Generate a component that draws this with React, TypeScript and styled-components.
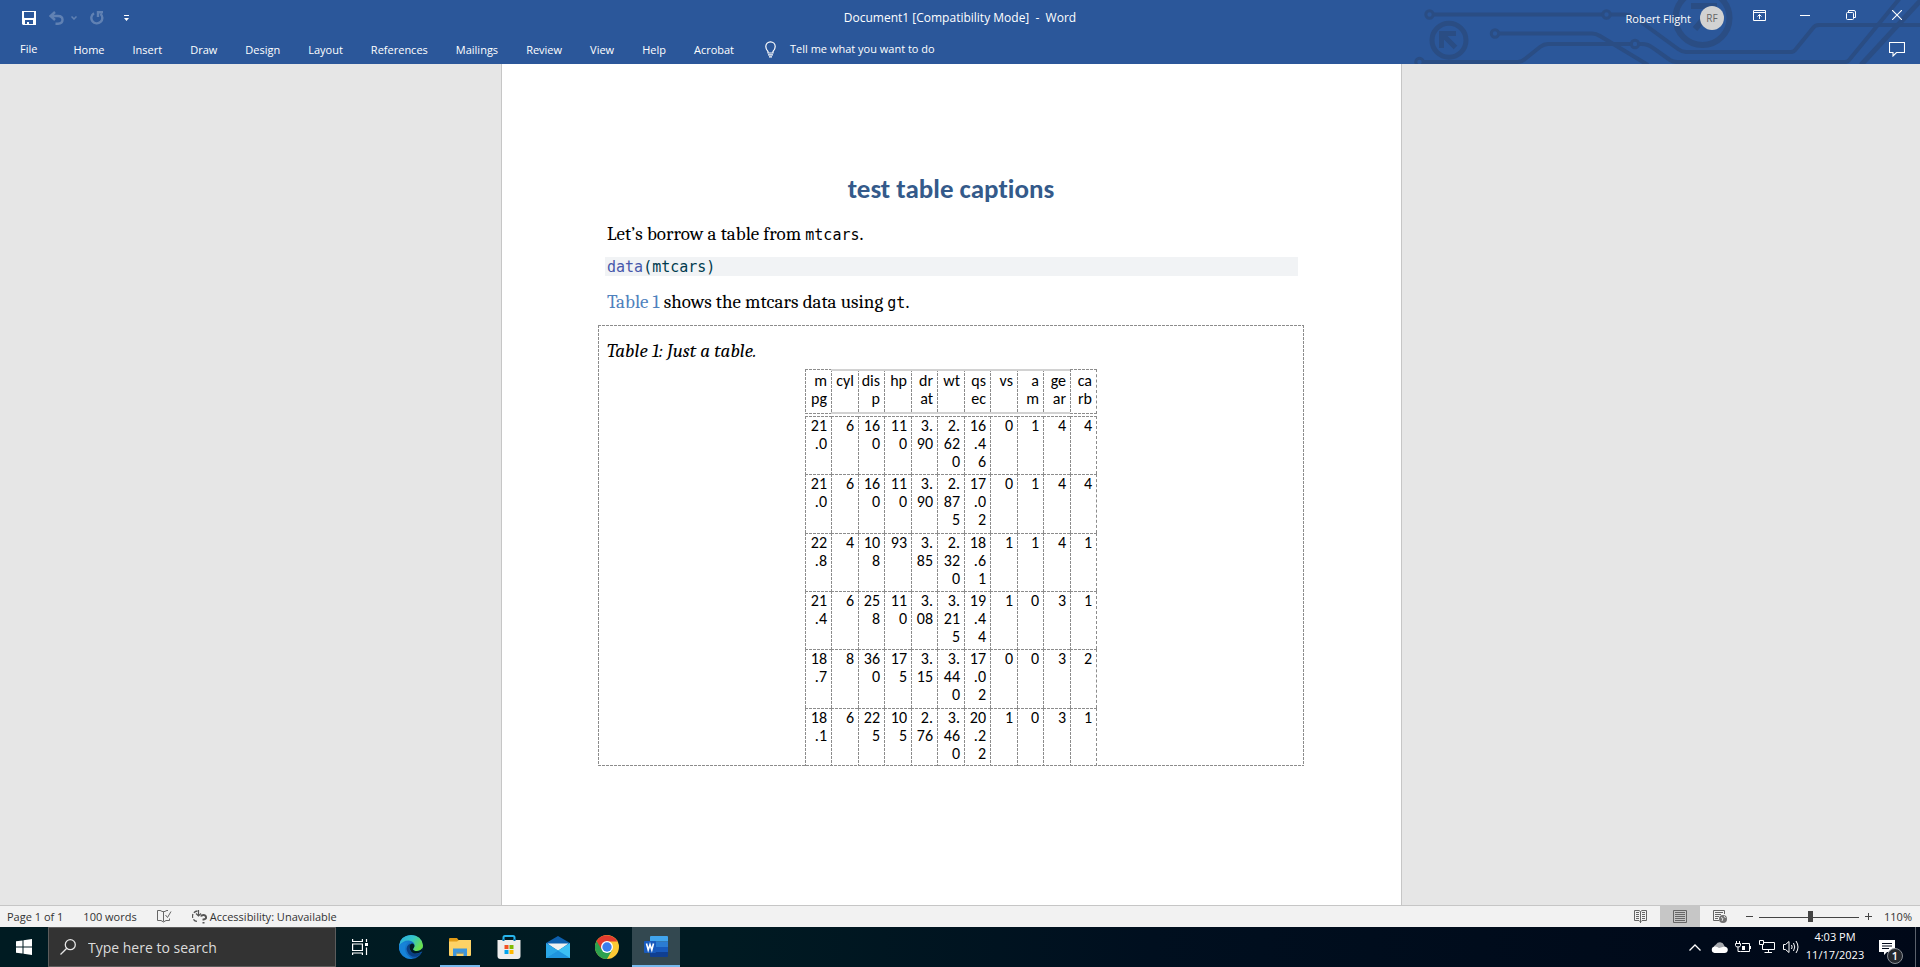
import React from 'react';
import styled, { createGlobalStyle } from 'styled-components';

const ui = `'Open Sans', 'Noto Sans', sans-serif`;
const serif = `Caladea, 'Liberation Serif', serif`;
const calibri = `Carlito, Lato, sans-serif`;
const mono = `'DejaVu Sans Mono', 'Liberation Mono', monospace`;

const dashX = 'repeating-linear-gradient(90deg, #8c8c8c 0 3px, transparent 3px 4px)';
const dashY = 'repeating-linear-gradient(180deg, #8c8c8c 0 3px, transparent 3px 4px)';

const GlobalStyle = createGlobalStyle`
  * { box-sizing: border-box; }
  body { margin: 0; background: #e6e6e6; font-family: ${ui}; }
  button { border: 0; padding: 0; background: none; font: inherit; color: inherit; }
  svg { display: block; }
`;

const Window = styled.div`
  display: flex;
  flex-direction: column;
  min-height: 100vh;
`;

/* ---------- title bar and ribbon ---------- */

const Header = styled.header`
  position: relative;
  flex: none;
  height: 64px;
  background: #2b579a;
  color: #fff;
  overflow: hidden;
`;

const Circuit = styled.svg`
  position: absolute;
  top: 0;
  right: 0;
`;

const TitleBar = styled.div`
  position: relative;
  display: grid;
  grid-template-columns: 1fr auto 1fr;
  height: 34px;
`;

const QuickAccess = styled.div`
  display: flex;
  align-items: center;
  gap: 13px;
  padding-left: 22px;
`;

const IconButton = styled.button<{ $dim?: boolean }>`
  display: flex;
  opacity: ${(p) => (p.$dim ? 0.25 : 1)};
`;

const Split = styled.div`
  display: flex;
  align-items: center;
  gap: 7px;
`;

const CustomizeButton = styled(IconButton)`
  margin-left: 7px;
`;

const DocTitle = styled.div`
  font-size: 12px;
  line-height: 36px;
  white-space: pre;
`;

const Account = styled.div`
  display: flex;
  justify-content: flex-end;
  align-items: center;
`;

const UserName = styled.span`
  font-size: 11px;
  margin-right: 9px;
`;

const Avatar = styled.span`
  width: 24px;
  height: 24px;
  margin-right: 12px;
  border-radius: 50%;
  background: #d2d2d2;
  color: #666;
  font-size: 10px;
  line-height: 24px;
  text-align: center;
`;

const WindowButton = styled.button`
  display: flex;
  justify-content: center;
  align-items: center;
  align-self: flex-start;
  width: 46px;
  height: 30px;
`;

const Ribbon = styled.nav`
  position: relative;
  display: flex;
  align-items: center;
  gap: 28px;
  height: 30px;
  padding: 0 15px 0 20px;
  font-size: 11px;
  line-height: 30px;
`;

const FileTab = styled.button`
  margin-right: 8px;
`;

const Tab = styled.button`
  padding-top: 2px;
`;

const TellMe = styled.button`
  display: flex;
  align-items: center;
  gap: 14px;
  margin: 0 auto 0 3px;
`;

/* ---------- document ---------- */

const Workspace = styled.main`
  flex: 1;
  display: flex;
  justify-content: center;
  padding-right: 17px;
  background: #e6e6e6;
`;

const Page = styled.article`
  width: 901px;
  padding: 109px 97px 0 96px;
  border: solid #c6c6c6;
  border-width: 0 1px;
  background: #fff;
  color: #000;
`;

const Heading = styled.h1`
  margin: 0 0 17px;
  color: #345a8a;
  font: bold 27px/32px ${calibri};
  font-variant-ligatures: none;
  text-align: center;
`;

const Paragraph = styled.p`
  margin: 0;
  padding: 0 9px;
  font: 19px/24px ${serif};
`;

const InlineCode = styled.code`
  font: 15px ${mono};
`;

const CodeBlock = styled.pre`
  margin: 11px 6px 14px 7px;
  padding: 1px 2px 0;
  background: #f1f3f5;
  color: #003b4f;
  font: 15px/18px ${mono};
`;

const Fn = styled.span`
  color: #4758ab;
`;

const CrossRef = styled.a`
  color: #4f81bd;
  text-decoration: none;
`;

const TableBox = styled.figure`
  margin: 11px 0 0;
  padding-top: 14px;
  background:
    ${dashX} 0 0 / 100% 1px no-repeat,
    ${dashX} 0 100% / 100% 1px no-repeat,
    ${dashY} 0 0 / 1px 100% no-repeat,
    ${dashY} 100% 0 / 1px 100% no-repeat;
`;

const Caption = styled.figcaption`
  padding: 0 9px 6px;
  font: italic 19px/24px ${serif};
`;

const DataTable = styled.table`
  width: 292px;
  margin: 0 auto;
  border-collapse: separate;
  border-spacing: 0;
  table-layout: fixed;
  font: 16px/18px ${calibri};
  text-align: right;

  tbody::before {
    content: '';
    display: table-row;
    height: 2px;
  }
`;

const HeadCell = styled.th<{ $edge: boolean }>`
  height: 45px;
  padding: 3px 4px 0 3px;
  font-weight: normal;
  text-align: right;
  vertical-align: top;
  line-break: anywhere;
  background:
    ${(p) => (p.$edge ? dashX : 'linear-gradient(#d2d2d2, #d2d2d2)')} 0 0 / 100% ${(p) => (p.$edge ? 1 : 2)}px no-repeat,
    ${(p) => (p.$edge ? dashX : 'linear-gradient(#d2d2d2, #d2d2d2)')} 0 100% / 100% ${(p) => (p.$edge ? 1 : 2)}px no-repeat,
    ${dashY} 0 0 / 1px 100% no-repeat;

  &:last-child {
    border-right: 1px dashed #8c8c8c;
  }
`;

const Row = styled.tr`
  height: 58px;

  &:nth-child(3n + 2) {
    height: 59px;
  }
`;

const Cell = styled.td`
  padding: 1px 4px 3px;
  vertical-align: top;
  line-break: anywhere;
  background:
    ${dashX} 0 0 / 100% 1px no-repeat,
    ${dashY} 0 0 / 1px 100% no-repeat;

  &:last-child {
    border-right: 1px dashed #8c8c8c;
  }
`;

/* ---------- status bar ---------- */

const StatusBar = styled.footer`
  display: flex;
  flex: none;
  align-items: center;
  height: 22px;
  padding: 0 8px 0 7px;
  border-top: 1px solid #c6c6c6;
  background: #f2f2f2;
  color: #333;
  font-size: 11px;
  line-height: 21px;
`;

const StatusItem = styled.button`
  display: flex;
  align-items: center;
  gap: 3px;
  margin-right: 20px;
`;

const ViewControls = styled.div`
  display: flex;
  align-items: center;
  margin-left: auto;
`;

const ViewButton = styled.button<{ $active?: boolean }>`
  display: flex;
  justify-content: center;
  align-items: center;
  width: 40px;
  height: 21px;
  background: ${(p) => (p.$active ? '#c6c6c6' : 'none')};
`;

const ZoomButton = styled.button`
  display: flex;
  margin: 0 5px;
`;

const ZoomSlider = styled.input`
  width: 100px;
  height: 12px;
  margin: 0;
  appearance: none;
  background: linear-gradient(#444, #444) 0 6px / 100% 1px no-repeat;

  &::-webkit-slider-thumb {
    appearance: none;
    width: 5px;
    height: 11px;
    background: #444;
  }
`;

const ZoomLevel = styled.button`
  margin-left: 6px;
`;

/* ---------- taskbar ---------- */

const Taskbar = styled.footer`
  display: flex;
  flex: none;
  height: 40px;
  background: linear-gradient(90deg, #001b22 0%, #001a22 38%, #000f1f 60%, #000818 100%);
  color: #fff;
`;

const TaskButton = styled.button<{ $active?: boolean; $wide?: boolean }>`
  position: relative;
  display: flex;
  justify-content: center;
  align-items: center;
  width: 48px;
  background: ${(p) => (p.$active ? '#334850' : 'none')};

  &::after {
    content: '';
    position: absolute;
    right: ${(p) => (p.$wide ? 4 : 0)}px;
    bottom: 0;
    left: ${(p) => (p.$wide ? 4 : 0)}px;
    height: ${(p) => (p.$active || p.$wide ? 2 : 0)}px;
    background: #76b9ed;
  }
`;

const SearchBox = styled.label`
  display: flex;
  align-items: center;
  gap: 12px;
  width: 288px;
  padding: 0 11px;
  border: 1px solid #5c5c5c;
  background: #333;
`;

const SearchInput = styled.input`
  flex: 1;
  min-width: 0;
  padding: 0;
  border: 0;
  outline: 0;
  background: none;
  color: #dcdcdc;
  font: 14px ${ui};

  &::placeholder { color: #dcdcdc; }
`;

const Apps = styled.div`
  display: flex;
  gap: 1px;
  margin-left: 3px;
`;

const Tray = styled.div`
  display: flex;
  align-items: center;
  margin-left: auto;
`;

const TrayButton = styled.button`
  display: flex;
  justify-content: center;
  width: 24px;
`;

const Clock = styled.button`
  width: 64px;
  padding-bottom: 2px;
  font-size: 11px;
  line-height: 18px;
  text-align: center;
`;

const Notifications = styled.button`
  position: relative;
  display: flex;
  margin: 0 20px 0 12px;
`;

const Badge = styled.span`
  position: absolute;
  top: 8px;
  left: 8px;
  width: 16px;
  height: 16px;
  border: 1px solid #8a8f96;
  border-radius: 50%;
  background: #25282e;
  font-size: 11px;
  font-weight: 600;
  line-height: 14px;
  text-align: center;
`;

const ShowDesktop = styled.button`
  width: 5px;
  height: 40px;
  border-left: 1px solid #5b616c;
`;

/* ---------- data ---------- */

const tabs = ['Home', 'Insert', 'Draw', 'Design', 'Layout', 'References', 'Mailings', 'Review', 'View', 'Help', 'Acrobat'];
const columns = ['mpg', 'cyl', 'disp', 'hp', 'drat', 'wt', 'qsec', 'vs', 'am', 'gear', 'carb'];
const widths = [26, 27, 26, 27, 26, 27, 26, 27, 26, 27, 27];
const rows = [
  ['21.0', '6', '160', '110', '3.90', '2.620', '16.46', '0', '1', '4', '4'],
  ['21.0', '6', '160', '110', '3.90', '2.875', '17.02', '0', '1', '4', '4'],
  ['22.8', '4', '108', '93', '3.85', '2.320', '18.61', '1', '1', '4', '1'],
  ['21.4', '6', '258', '110', '3.08', '3.215', '19.44', '1', '0', '3', '1'],
  ['18.7', '8', '360', '175', '3.15', '3.440', '17.02', '0', '0', '3', '2'],
  ['18.1', '6', '225', '105', '2.76', '3.460', '20.22', '1', '0', '3', '1'],
];

/* ---------- drawings ---------- */

const CircuitArt = () => (
  <Circuit width="520" height="64" viewBox="0 0 520 64" fill="none" stroke="#2a4d84" strokeWidth="4" aria-hidden="true">
    <circle cx="29.500" cy="14.500" r="3.700" strokeWidth="3" />
    <path d="M33 14.500H203M210 14.500H224Q230 14.500 234 17L278 49Q282 52 286 52H391Q394 52 396 49L413 28Q415 25 419 25H520" />
    <circle cx="206.500" cy="14.500" r="3.700" strokeWidth="3" />
    <circle cx="49" cy="40.300" r="17" strokeWidth="5" />
    <path d="M41.500 48V33.500H56M42 34L55.500 47.500" strokeWidth="5" />
    <circle cx="95" cy="33.500" r="3.700" strokeWidth="3" />
    <path d="M99 33.500H192Q196 33.500 200 36L248 65" />
    <circle cx="19.500" cy="62" r="3.700" strokeWidth="3" />
    <path d="M23 62H118Q122 62 125 59L140 47Q144 44 148 44H231M239 44H242Q248 44 253 48L270 60Q273 62 277 62H445Q448 62 450 59L500 -2" />
    <circle cx="235" cy="44" r="3.700" strokeWidth="3" />
    <circle cx="302.500" cy="18" r="27" strokeWidth="6" />
    <path d="M291 6H314V22M314 7L295 29" strokeWidth="6" />
    <path d="M461 65L522 -1" strokeWidth="5" />
  </Circuit>
);

const SaveIcon = () => (
  <svg width="14" height="14" viewBox="0 0 14 14">
    <path fillRule="evenodd" fill="#fff" d="M0 0H14V14H1L0 13ZM2 1V6.500L2.500 7H11.500L12 6.500V1ZM3 9V13H5V11H7V13H11V9Z" />
  </svg>
);
const UndoIcon = () => (
  <svg width="15" height="14" viewBox="0 0 15 14" fill="none" stroke="#fff" strokeWidth="2.400">
    <path d="M6 1L1.500 5L6 9M2 5H9Q13.500 5 13.500 8.800T9 12.700H6.500" />
  </svg>
);
const RedoIcon = () => (
  <svg width="14" height="14" viewBox="0 0 14 14" fill="none" stroke="#fff" strokeWidth="2.400">
    <path d="M4 2.200A5.500 5.500 0 1 0 10.500 2.800M8 6V1.200H13" />
  </svg>
);
const SmallChevron = () => (
  <svg width="6" height="4" viewBox="0 0 6 4" fill="none" stroke="#fff" strokeWidth="1.500"><path d="M.5 .5L3 3L5.500 .5" /></svg>
);
const CustomizeIcon = () => (
  <svg width="5" height="6" viewBox="0 0 5 6" fill="#fff"><path d="M0 0H5V1H0ZM0 3H5L2.500 6Z" /></svg>
);
const BulbIcon = () => (
  <svg width="11" height="17" viewBox="0 0 11 17" fill="none" stroke="#fff" strokeWidth="1.200">
    <path d="M3 12V10.500Q.8 8.500 .8 5.500A4.700 4.700 0 0 1 10.200 5.500Q10.200 8.500 8 10.500V12ZM3 13.800H8M4 15.800H7" />
  </svg>
);
const CommentIcon = () => (
  <svg width="16" height="15" viewBox="0 0 16 15" fill="none" stroke="#fff" strokeWidth="1.100">
    <path d="M.5 .5H15.500V10.500H7.500L4 14V10.500H.5Z" />
  </svg>
);
const RibbonModeIcon = () => (
  <svg width="13" height="11" viewBox="0 0 13 11" fill="none" stroke="#fff">
    <path d="M.5 .5H12.500V10.500H.5ZM.5 2.500H12.500M6.500 9V4.500M4.500 6.500L6.500 4.500L8.500 6.500" />
  </svg>
);
const MinimizeIcon = () => (
  <svg width="10" height="11" viewBox="0 0 10 11" stroke="#fff"><path d="M0 5.500H10" /></svg>
);
const RestoreIcon = () => (
  <svg width="10" height="10" viewBox="0 0 10 10" fill="none" stroke="#fff">
    <rect x=".5" y="2.500" width="7" height="7" rx="1" /><path d="M2.500 2V.5H8Q9.500 .5 9.500 2V7.500H8" />
  </svg>
);
const CloseIcon = () => (
  <svg width="10" height="10" viewBox="0 0 10 10" stroke="#fff" strokeWidth="1.100"><path d="M0 0L10 10M10 0L0 10" /></svg>
);

const ProofIcon = () => (
  <svg width="15" height="13" viewBox="0 0 15 13" fill="none" stroke="#666">
    <path d="M6.500 11.500V1.500H5Q4 .5 3 .5H.5V10.500H4L6.500 12L9 10.500H12.500V8.500M6.500 1.500H8Q9 .5 10 .5H11M8.500 5L10.500 7.500L14 1.500" />
  </svg>
);
const AccessibilityIcon = () => (
  <svg width="15" height="14" viewBox="0 0 15 14" fill="none" stroke="#555">
    <path d="M5.500 1A5 5 0 1 0 6 11.500" strokeDasharray="4 1.500" strokeWidth="1.300" />
    <path d="M6.500 0V6M4 3.500L6.500 6L9 3.500" strokeWidth="1.200" />
    <path d="M9 6.500Q9.500 5 11.500 5T14 7T11.500 9.500V10.500M11.500 12V13.500" strokeWidth="2" />
  </svg>
);
const ReadModeIcon = () => (
  <svg width="13" height="13" viewBox="0 0 13 13" fill="none" stroke="#666">
    <path d="M6.500 13V1.500M.5 .5H5L6.500 1.500L8 .5H12.500V10.500H8L6.500 12L5 10.500H.5ZM2 2.500H5M2 4.500H5M2 6.500H5M2 8.500H5M8 2.500H11M8 4.500H11M8 6.500H11M8 8.500H11" />
  </svg>
);
const PrintLayoutIcon = () => (
  <svg width="14" height="13" viewBox="0 0 14 13" fill="none" stroke="#666">
    <path d="M.5 .5H13.500V12.500H.5ZM2 2.500H12M2 4.500H12M2 6.500H12M2 8.500H12M2 10.500H12" />
  </svg>
);
const WebLayoutIcon = () => (
  <svg width="14" height="13" viewBox="0 0 14 13" fill="none" stroke="#666">
    <path d="M6 10.500H.5V.5H11.500V4M2 2.500H10M2 4.500H8M2 6.500H6M2 8.500H5" />
    <circle cx="10" cy="9" r="4" fill="#707070" stroke="none" />
    <path d="M8 7.500L10 8.500L9 11M11 6L12.500 8" stroke="#e6e6e6" />
  </svg>
);

const WindowsLogo = () => (
  <svg width="16" height="16" viewBox="0 0 16 16" fill="#fff">
    <path d="M0 2.300L6.500 1.400V7.500H0ZM7.500 1.200L16 0V7.500H7.500ZM0 8.500H6.500V14.600L0 13.700ZM7.500 8.500H16V16L7.500 14.800Z" />
  </svg>
);
const SearchIcon = () => (
  <svg width="16" height="16" viewBox="0 0 16 16" fill="none" stroke="#e6e6e6" strokeWidth="1.300">
    <circle cx="10.300" cy="5.700" r="5" /><path d="M6.800 9.300L.5 15.500" />
  </svg>
);
const TaskViewIcon = () => (
  <svg width="16" height="16" viewBox="0 0 16 16" fill="none" stroke="#fff" strokeWidth="1.200">
    <path d="M.6 0V2.500H10.400V0M.6 5H10.400V11.500H.6ZM.6 16V14H10.400V16M14.500 0V3M14.500 8.500V16" /><path d="M13 4H16V7H13Z" fill="#fff" stroke="none" />
  </svg>
);
const EdgeIcon = () => (
  <svg width="24" height="24" viewBox="0 0 24 24">
    <defs>
      <linearGradient id="edgeTop" x1="0" y1="0" x2="1" y2=".5"><stop offset="0" stopColor="#2aa9e0" /><stop offset=".55" stopColor="#34c6c8" /><stop offset="1" stopColor="#6be04c" /></linearGradient>
      <linearGradient id="edgeBody" x1="0" y1="0" x2="1" y2="1"><stop offset="0" stopColor="#1c8fe0" /><stop offset="1" stopColor="#0c4ea6" /></linearGradient>
    </defs>
    <circle cx="12" cy="12" r="12" fill="url(#edgeBody)" />
    <path d="M0 11Q4 5 10 5.500Q16 6.500 15.500 11Q15 13 14 14Q14 16 18 16Q24 15.500 24 10.500Q22.500 0 12 0Q1 .5 0 11Z" fill="url(#edgeTop)" />
    <path d="M0 11Q3.500 6.500 9 7.500Q5.500 10 6 15Q7 21 14 23.800Q3 25 0 14Z" fill="#1683d8" />
    <path d="M11 8.500Q6.500 11 8 16Q10.500 22 16 21.800Q20 21.500 22.500 17.500Q18 19.500 14 18Q10 16 10.500 12Q10.700 10 11 8.500Z" fill="#0a3f84" />
    <path d="M14 14Q15 13 15.500 11Q15.500 9 13.500 8.500Q10.500 8.500 10.500 12Q10.700 16 14 18Q18 19.500 23 16.500L24 16L23.500 12.500Q22 15.800 18 16Q14 16 14 14Z" fill="#001b22" />
  </svg>
);
const ExplorerIcon = () => (
  <svg width="22" height="18" viewBox="0 0 22 18">
    <path d="M0 1Q0 0 1 0H8L9.500 2H21V8H0Z" fill="#e29c17" />
    <path d="M0 3.500H8L10 2H22V17Q22 18 21 18H1Q0 18 0 17Z" fill="#fdd266" />
    <path d="M4 10.500H18V18H14.500V14.500H7.500V18H4Z" fill="#3d96dc" />
    <path d="M7.500 14.500H14.500V15.500H7.500Z" fill="#1f6fb6" />
  </svg>
);
const StoreIcon = () => (
  <svg width="24" height="24" viewBox="0 0 24 24">
    <path d="M6.500 5V2.500Q6.500 1 8 1H16Q17.500 1 17.500 2.500V5" fill="none" stroke="#28b5ec" strokeWidth="2" />
    <path d="M.5 5H23.500V21Q23.500 24 20.500 24H3.500Q.5 24 .5 21Z" fill="#ededed" />
    <path d="M5.500 4H7.500V6H5.500ZM16.500 4H18.500V6H16.500Z" fill="#0a77b5" />
    <path d="M7.500 10H11.500V14H7.500Z" fill="#f25022" /><path d="M12.500 10H16.500V14H12.500Z" fill="#7fba00" />
    <path d="M7.500 15H11.500V19H7.500Z" fill="#00a4ef" /><path d="M12.500 15H16.500V19H12.500Z" fill="#ffb900" />
  </svg>
);
const MailIcon = () => (
  <svg width="24" height="22" viewBox="0 0 24 22">
    <path d="M0 7L12 0L24 7V12H0Z" fill="#0d5fae" />
    <path d="M1.500 7.500H22.500L12 15Z" fill="#f1f1f1" />
    <path d="M0 7L13 15L24 22H0Z" fill="#2ba8e8" />
    <path d="M24 7L0 22H24Z" fill="#3cc0f4" />
    <path d="M0 22L12 14.500L24 22Z" fill="#1f95de" />
  </svg>
);
const ChromeIcon = () => (
  <svg width="24" height="24" viewBox="0 0 24 24">
    <circle cx="12" cy="12" r="12" fill="#fcc934" />
    <path d="M12 12L1.600 6A12 12 0 0 0 12 24L17.200 15Z" fill="#2da14f" />
    <path d="M12 6.500H22.400A12 12 0 0 0 1.600 6L7 15Z" fill="#e33b2e" />
    <circle cx="12" cy="12" r="6" fill="#fff" /><circle cx="12" cy="12" r="4.700" fill="#3b7ded" />
  </svg>
);
const WordIcon = () => (
  <svg width="24" height="22" viewBox="0 0 24 22">
    <path d="M6 1Q6 0 7 0H23Q24 0 24 1V5.500H6Z" fill="#41a5ee" /><path d="M6 5.500H24V11H6Z" fill="#2b7cd3" />
    <path d="M6 11H24V16H6Z" fill="#185abd" /><path d="M6 16H24V20Q24 21 23 21H7Q6 21 6 20Z" fill="#103f91" />
    <rect y="5" width="12" height="12" rx="1" fill="#185abd" />
    <path d="M2.500 7.500L4.200 14L6 8.500L7.800 14L9.500 7.500" fill="none" stroke="#fff" strokeWidth="1.600" />
  </svg>
);

const ChevronUp = () => (
  <svg width="12" height="7" viewBox="0 0 12 7" fill="none" stroke="#fff" strokeWidth="1.300"><path d="M.5 6.500L6 1L11.500 6.500" /></svg>
);
const CloudIcon = () => (
  <svg width="17" height="11" viewBox="0 0 17 11">
    <path d="M3 8A4 4 0 0 1 5 2.500A4.500 4.500 0 0 1 13 3L14 6Z" fill="#a5a8ad" />
    <path d="M3.500 11A3.300 3.300 0 0 1 3.500 4.500Q6 4 8 6L13.500 4.500Q17 5 16.800 8Q16.500 11 13.500 11Z" fill="#fff" />
  </svg>
);
const BatteryIcon = () => (
  <svg width="16" height="12" viewBox="0 0 16 12" fill="none" stroke="#fff">
    <path d="M7 2.500H14.500V10.500H5.500M15.500 5V8M1.500 0V2.500M4.500 0V2.500M.5 2.500H5.500V4.500Q5.500 6 3 6T.5 4.500ZM3 6V10.500H5.500" /><path d="M7 5H10V9H7Z" fill="#fff" stroke="none" />
  </svg>
);
const NetworkIcon = () => (
  <svg width="16" height="14" viewBox="0 0 16 14" fill="none" stroke="#fff">
    <path d="M5 2.500H15.500V9.500H3.500V5M9.500 9.500V12.500M5.500 12.500H13M.5 .5H4.500V4.500H.5Z" />
  </svg>
);
const SpeakerIcon = () => (
  <svg width="17" height="14" viewBox="0 0 17 14" fill="none" stroke="#fff">
    <path d="M.5 4.500H2.500L6 1.500V12.500L2.500 9.500H.5ZM8.500 5Q9.800 7 8.500 9M10.500 3Q13 7 10.500 11M13 1Q17 7 13 13" />
  </svg>
);
const NoticeIcon = () => (
  <svg width="16" height="15" viewBox="0 0 16 15">
    <path d="M0 0H16V12H8L5 15V12H0Z" fill="#fff" /><path d="M3 3.500H13M3 6H13M3 8.500H10" stroke="#000818" />
  </svg>
);

/* ---------- app ---------- */

export default function App() {
  return (
    <Window>
      <GlobalStyle />
      <Header>
        <CircuitArt />
        <TitleBar>
          <QuickAccess>
            <IconButton aria-label="Save"><SaveIcon /></IconButton>
            <Split>
              <IconButton $dim aria-label="Undo"><UndoIcon /></IconButton>
              <IconButton $dim aria-label="Undo history"><SmallChevron /></IconButton>
            </Split>
            <IconButton $dim aria-label="Redo"><RedoIcon /></IconButton>
            <CustomizeButton aria-label="Customize Quick Access Toolbar"><CustomizeIcon /></CustomizeButton>
          </QuickAccess>
          <DocTitle>{'Document1 [Compatibility Mode]  -  Word'}</DocTitle>
          <Account>
            <UserName>Robert Flight</UserName>
            <Avatar>RF</Avatar>
            <WindowButton aria-label="Ribbon display options"><RibbonModeIcon /></WindowButton>
            <WindowButton aria-label="Minimize"><MinimizeIcon /></WindowButton>
            <WindowButton aria-label="Restore"><RestoreIcon /></WindowButton>
            <WindowButton aria-label="Close"><CloseIcon /></WindowButton>
          </Account>
        </TitleBar>
        <Ribbon>
          <FileTab>File</FileTab>
          {tabs.map((t) => <Tab key={t}>{t}</Tab>)}
          <TellMe><BulbIcon />Tell me what you want to do</TellMe>
          <IconButton aria-label="Comments"><CommentIcon /></IconButton>
        </Ribbon>
      </Header>

      <Workspace>
        <Page>
          <Heading>test table captions</Heading>
          <Paragraph>Let’s borrow a table from <InlineCode>mtcars</InlineCode>.</Paragraph>
          <CodeBlock><Fn>data</Fn>(mtcars)</CodeBlock>
          <Paragraph><CrossRef href="#table-1">Table 1</CrossRef> shows the mtcars data using <InlineCode>gt</InlineCode>.</Paragraph>
          <TableBox id="table-1">
            <Caption>Table 1: Just a table.</Caption>
            <DataTable>
              <colgroup>{widths.map((w, i) => <col key={i} width={w} />)}</colgroup>
              <thead>
                <tr>{columns.map((c, i) => <HeadCell key={c} scope="col" $edge={i === 0 || i === columns.length - 1}>{c}</HeadCell>)}</tr>
              </thead>
              <tbody>
                {rows.map((row, r) => <Row key={r}>{row.map((v, i) => <Cell key={i}>{v}</Cell>)}</Row>)}
              </tbody>
            </DataTable>
          </TableBox>
        </Page>
      </Workspace>

      <StatusBar>
        <StatusItem>Page 1 of 1</StatusItem>
        <StatusItem>100 words</StatusItem>
        <StatusItem aria-label="Proofing"><ProofIcon /></StatusItem>
        <StatusItem><AccessibilityIcon />Accessibility: Unavailable</StatusItem>
        <ViewControls>
          <ViewButton aria-label="Read mode"><ReadModeIcon /></ViewButton>
          <ViewButton $active aria-label="Print layout"><PrintLayoutIcon /></ViewButton>
          <ViewButton aria-label="Web layout"><WebLayoutIcon /></ViewButton>
          <ZoomButton aria-label="Zoom out"><svg width="9" height="9" stroke="#444"><path d="M1 4.500H8" /></svg></ZoomButton>
          <ZoomSlider type="range" min={0} max={200} defaultValue={103} aria-label="Zoom" />
          <ZoomButton aria-label="Zoom in"><svg width="9" height="9" stroke="#444"><path d="M1 4.500H8M4.500 1V8" /></svg></ZoomButton>
          <ZoomLevel>110%</ZoomLevel>
        </ViewControls>
      </StatusBar>

      <Taskbar>
        <TaskButton aria-label="Start"><WindowsLogo /></TaskButton>
        <SearchBox>
          <SearchIcon />
          <SearchInput type="text" placeholder="Type here to search" aria-label="Type here to search" />
        </SearchBox>
        <TaskButton aria-label="Task View"><TaskViewIcon /></TaskButton>
        <Apps>
          <TaskButton aria-label="Edge"><EdgeIcon /></TaskButton>
          <TaskButton $wide aria-label="File Explorer"><ExplorerIcon /></TaskButton>
          <TaskButton aria-label="Store"><StoreIcon /></TaskButton>
          <TaskButton aria-label="Mail"><MailIcon /></TaskButton>
          <TaskButton aria-label="Chrome"><ChromeIcon /></TaskButton>
          <TaskButton $active aria-label="Word"><WordIcon /></TaskButton>
        </Apps>
        <Tray>
          <TrayButton aria-label="Hidden icons"><ChevronUp /></TrayButton>
          <TrayButton aria-label="OneDrive"><CloudIcon /></TrayButton>
          <TrayButton aria-label="Battery"><BatteryIcon /></TrayButton>
          <TrayButton aria-label="Network"><NetworkIcon /></TrayButton>
          <TrayButton aria-label="Volume"><SpeakerIcon /></TrayButton>
          <Clock>4:03 PM<br />11/17/2023</Clock>
          <Notifications aria-label="Notifications"><NoticeIcon /><Badge>1</Badge></Notifications>
          <ShowDesktop aria-label="Show desktop" />
        </Tray>
      </Taskbar>
    </Window>
  );
}
